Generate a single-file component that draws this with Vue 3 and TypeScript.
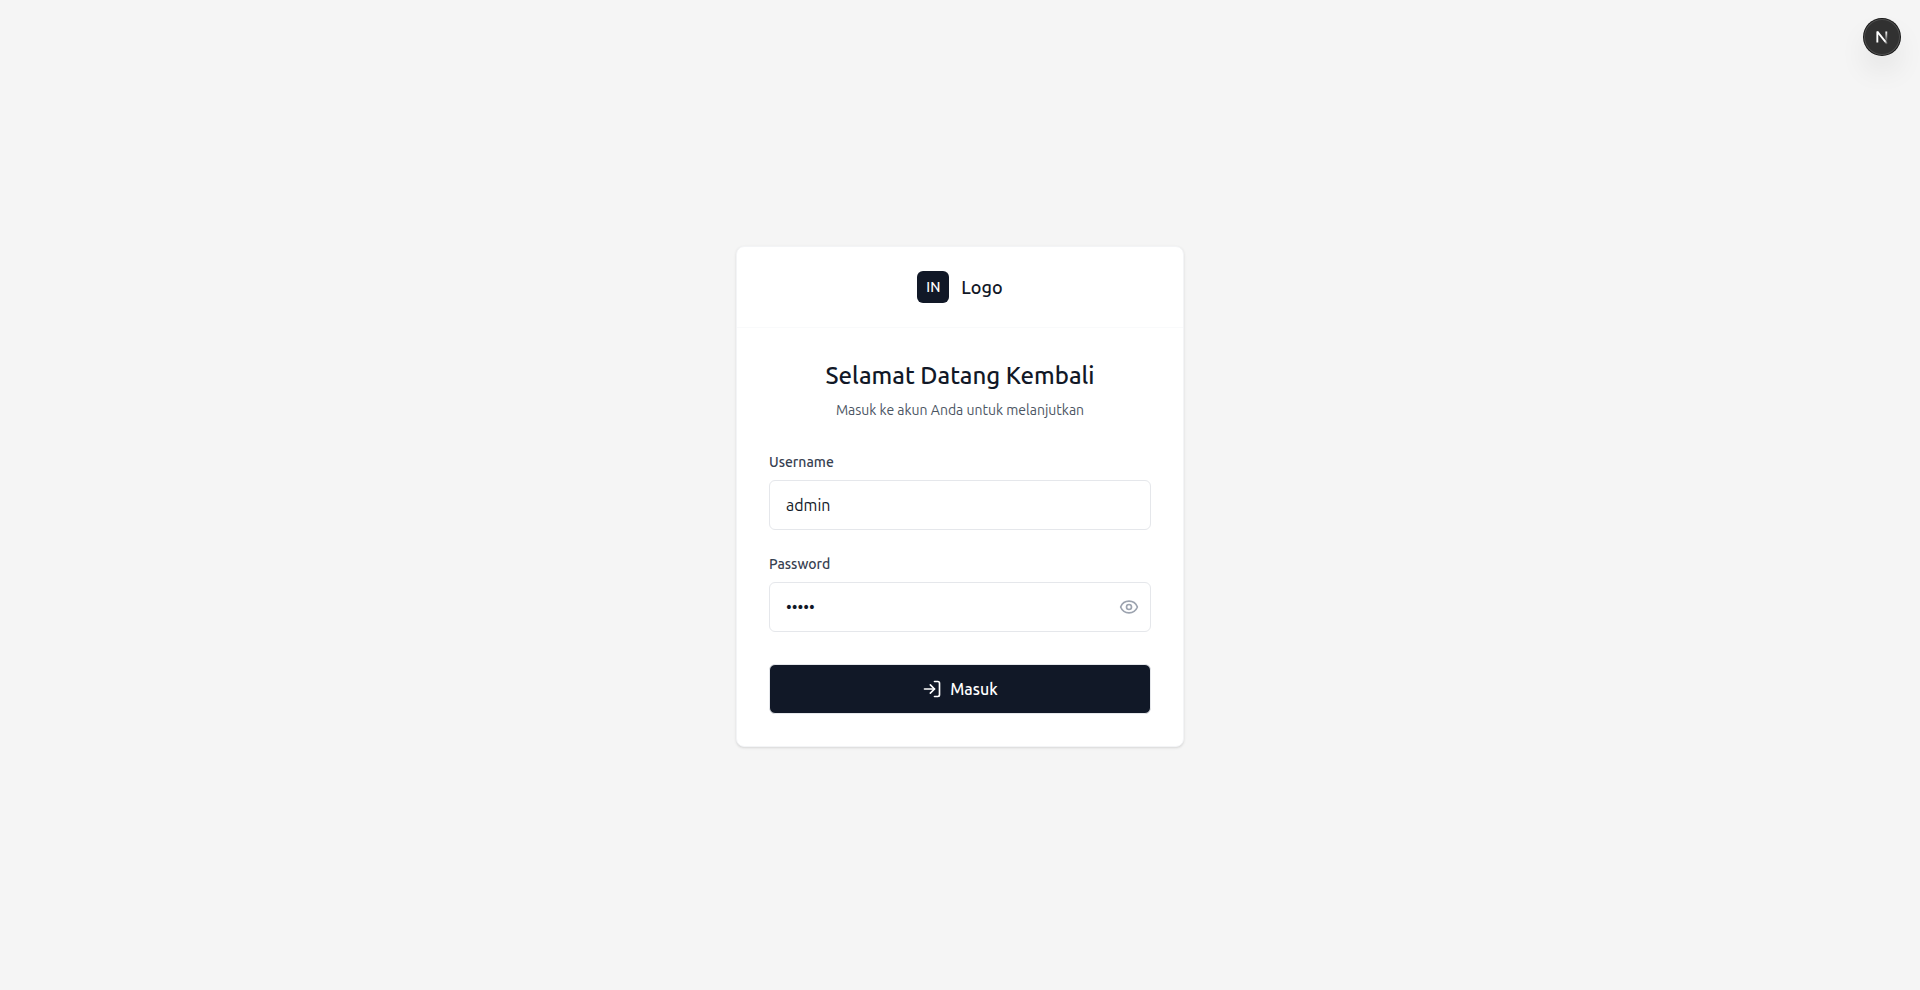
<script setup lang="ts">
import { ref } from 'vue'

const username = ref<string>('admin')
const password = ref<string>('admin')
const showPassword = ref<boolean>(false)
</script>

<template>
  <main class="page">
    <section class="card">
      <header class="brand">
        <span class="brand-mark">IN</span>
        <span class="brand-name">Logo</span>
      </header>
      <div class="body">
        <h1 class="title">Selamat Datang Kembali</h1>
        <p class="subtitle">Masuk ke akun Anda untuk melanjutkan</p>
        <form class="form" @submit.prevent>
          <div class="field">
            <label for="username">Username</label>
            <input id="username" v-model="username" type="text" autocomplete="username" />
          </div>
          <div class="field">
            <label for="password">Password</label>
            <div class="password">
              <input
                id="password"
                v-model="password"
                :type="showPassword ? 'text' : 'password'"
                autocomplete="current-password"
              />
              <button
                class="toggle"
                type="button"
                aria-label="Tampilkan password"
                @click="showPassword = !showPassword"
              >
                <svg class="icon" viewBox="0 0 24 24">
                  <path
                    d="M2.062 12.348a1 1 0 0 1 0-.696 10.75 10.75 0 0 1 19.876 0 1 1 0 0 1 0 .696 10.75 10.75 0 0 1-19.876 0"
                  />
                  <circle cx="12" cy="12" r="3" />
                </svg>
              </button>
            </div>
          </div>
          <button class="submit" type="submit">
            <svg class="icon" viewBox="0 0 24 24">
              <path d="M15 3h4a2 2 0 0 1 2 2v14a2 2 0 0 1-2 2h-4" />
              <path d="m10 17 5-5-5-5" />
              <path d="M15 12H3" />
            </svg>
            <span>Masuk</span>
          </button>
        </form>
      </div>
    </section>

    <button class="dev-badge" type="button" aria-label="Dev Tools">
      <svg width="40" height="40" viewBox="0 0 40 40" fill="none">
        <defs>
          <linearGradient id="diag" x1="10" y1="11" x2="14" y2="16" gradientUnits="userSpaceOnUse">
            <stop stop-color="#fff" />
            <stop offset="0.6" stop-color="#fff" stop-opacity="0" />
            <stop offset="1" stop-color="#fff" stop-opacity="0" />
          </linearGradient>
          <linearGradient id="stem" x1="11.8" y1="1.4" x2="11.79" y2="12" gradientUnits="userSpaceOnUse">
            <stop stop-color="#fff" />
            <stop offset="1" stop-color="#fff" stop-opacity="0" />
          </linearGradient>
        </defs>
        <g transform="translate(13 13)" stroke-width="1.86" stroke-linejoin="bevel">
          <path d="M12.7 14.6 2.34 1.6V12.4" stroke="url(#diag)" />
          <path d="M11.3 1.5V12.4" stroke="url(#stem)" />
        </g>
      </svg>
    </button>
  </main>
</template>

<style>
body {
  margin: 0;
  background: #f5f5f5;
}
</style>

<style scoped>
.page {
  box-sizing: border-box;
  min-height: 100vh;
  display: flex;
  align-items: center;
  justify-content: center;
  padding: 19px 16px 16px;
  font-family: Ubuntu, Roboto, "Noto Sans", sans-serif;
  font-size: 16px;
  line-height: 24px;
  color: #111827;
}

.card {
  box-sizing: border-box;
  width: 100%;
  max-width: 448px;
  background: #fff;
  border: 1px solid #f3f4f6;
  border-radius: 8px;
  box-shadow: 0 1px 3px rgba(0, 0, 0, 0.1), 0 1px 2px -1px rgba(0, 0, 0, 0.1);
}

.brand {
  display: flex;
  align-items: center;
  justify-content: center;
  gap: 12px;
  padding: 24px;
  border-bottom: 1px solid #f9fafb;
}

.brand-mark {
  display: flex;
  align-items: center;
  justify-content: center;
  width: 32px;
  height: 32px;
  border-radius: 6px;
  background: #111827;
  color: #fff;
  font-size: 14px;
  line-height: 20px;
  font-weight: 500;
}

.brand-name {
  font-size: 18px;
  line-height: 28px;
  font-weight: 500;
}

.body {
  padding: 32px;
}

.title {
  margin: 0;
  font-size: 24px;
  line-height: 32px;
  font-weight: 500;
  text-align: center;
}

.subtitle {
  margin: 8px 0 32px;
  font-size: 14px;
  line-height: 20px;
  text-align: center;
  color: #4b5563;
}

.form {
  display: flex;
  flex-direction: column;
}

.field {
  display: flex;
  flex-direction: column;
  gap: 8px;
  margin-bottom: 24px;
}

.field:nth-child(2) {
  margin-bottom: 32px;
}

label {
  font-size: 14px;
  line-height: 20px;
  font-weight: 500;
  color: #374151;
}

input {
  box-sizing: border-box;
  width: 100%;
  height: 50px;
  padding: 12px 16px;
  border: 1px solid #e5e7eb;
  border-radius: 6px;
  outline: none;
  background: #fff;
  color: #111827;
  font: inherit;
}

.password {
  position: relative;
}

.password input {
  padding-right: 48px;
}

.toggle {
  position: absolute;
  top: 0;
  right: 0;
  bottom: 0;
  display: flex;
  align-items: center;
  padding: 0 12px;
  border: 0;
  background: none;
  color: #9ca3af;
  cursor: pointer;
}

.icon {
  width: 20px;
  height: 20px;
  fill: none;
  stroke: currentColor;
  stroke-width: 2;
  stroke-linecap: round;
  stroke-linejoin: round;
}

.submit {
  display: flex;
  align-items: center;
  justify-content: center;
  gap: 8px;
  padding: 12px 16px;
  border: 1px solid #e5e7eb;
  border-radius: 6px;
  background: #111827;
  color: #fff;
  font: inherit;
  font-weight: 500;
  cursor: pointer;
}

.dev-badge {
  position: fixed;
  top: 19px;
  right: 20px;
  display: flex;
  align-items: center;
  justify-content: center;
  width: 36px;
  height: 36px;
  padding: 0;
  border: 0;
  border-radius: 50%;
  background: #313131;
  box-shadow: 0 0 0 1px #171717, inset 0 0 0 1px rgba(255, 255, 255, 0.14),
    0 16px 32px -8px rgba(0, 0, 0, 0.24);
  cursor: pointer;
}

.dev-badge svg {
  flex: none;
}
</style>
